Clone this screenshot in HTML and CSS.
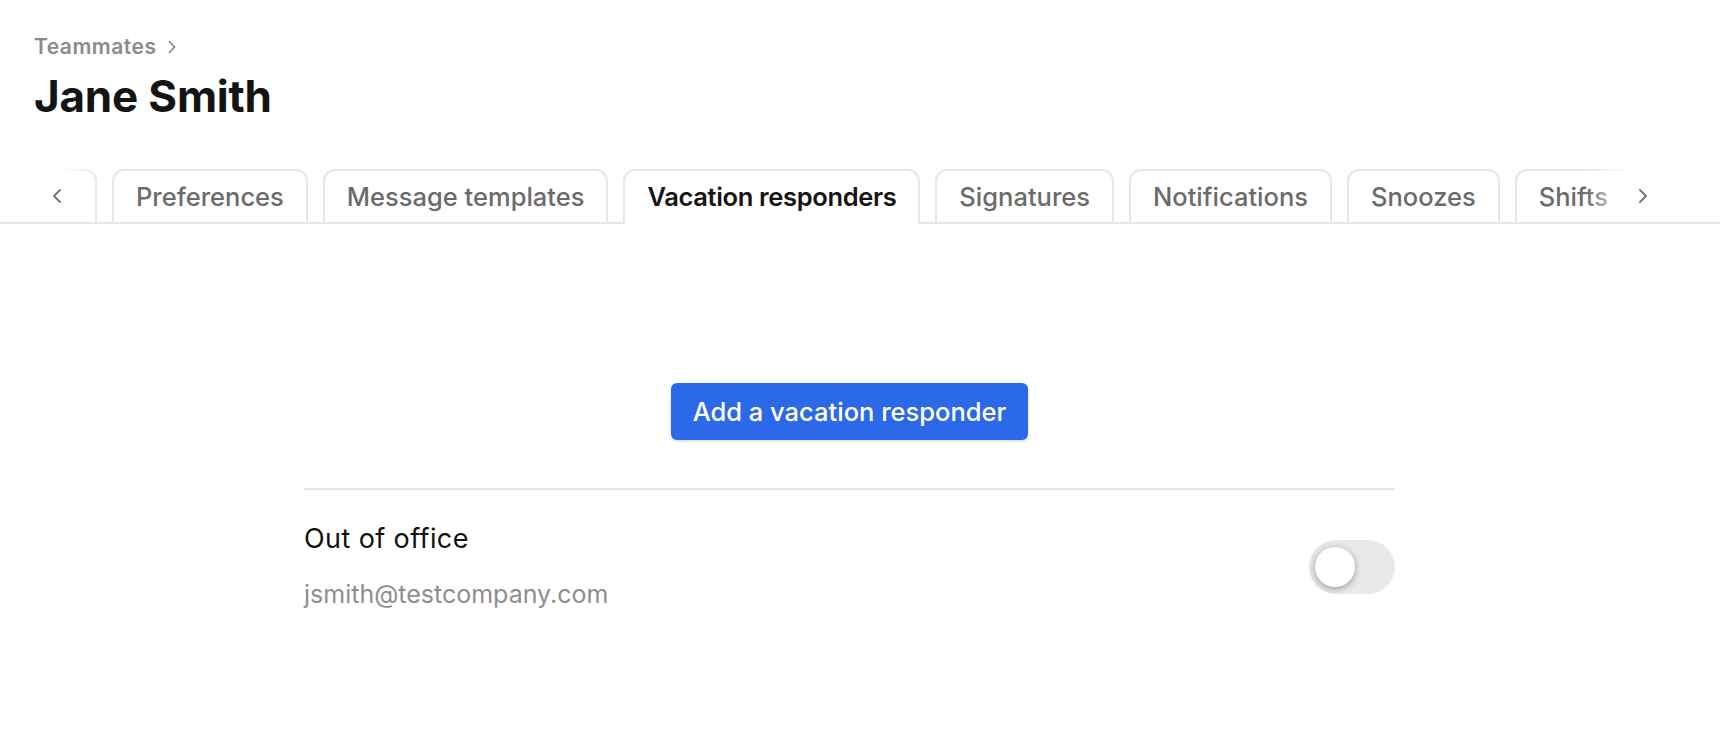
FILE: index.html
```html
<!DOCTYPE html>
<html lang="en">
<head>
<meta charset="utf-8">
<title>Jane Smith - Teammates</title>
<link rel="stylesheet" href="styles.css">
</head>
<body>
<header class="header">
  <nav class="crumbs">
    <a class="crumb" href="#">Teammates</a>
    <svg class="crumb-chev" viewBox="0 0 8 14" width="8" height="14" aria-hidden="true"><path d="M1.5 1.5 L6.5 7 L1.5 12.5" fill="none" stroke="currentColor" stroke-width="1.8" stroke-linecap="round" stroke-linejoin="round"/></svg>
  </nav>
  <h1 class="title">Jane Smith</h1>
</header>

<div class="tabs-wrap">
  <div class="tabs">
    <div class="tab tab-offscreen" aria-hidden="true"></div>
    <div class="tab">Preferences</div>
    <div class="tab">Message templates</div>
    <div class="tab tab-active">Vacation responders</div>
    <div class="tab">Signatures</div>
    <div class="tab">Notifications</div>
    <div class="tab">Snoozes</div>
    <div class="tab">Shifts</div>
  </div>
  <div class="fade fade-left">
    <svg class="chev" viewBox="0 0 10 16" width="10" height="16" aria-hidden="true"><path d="M8 2 L2 8 L8 14" fill="none" stroke="currentColor" stroke-width="2" stroke-linecap="round" stroke-linejoin="round"/></svg>
  </div>
  <div class="fade fade-right">
    <svg class="chev" viewBox="0 0 10 16" width="10" height="16" aria-hidden="true"><path d="M2 2 L8 8 L2 14" fill="none" stroke="currentColor" stroke-width="2" stroke-linecap="round" stroke-linejoin="round"/></svg>
  </div>
</div>

<main class="main">
  <div class="actions">
    <button class="btn-primary" type="button">Add a vacation responder</button>
  </div>
  <div class="divider"></div>
  <div class="row">
    <div class="row-text">
      <div class="row-title">Out of office</div>
      <div class="row-sub">jsmith@testcompany.com</div>
    </div>
    <div class="toggle" role="switch" aria-checked="false"><span class="knob"></span></div>
  </div>
</main>
</body>
</html>
```

FILE: styles.css
```css
* { box-sizing: border-box; }

html, body {
  margin: 0;
  background: #ffffff;
}

body {
  font-family: Inter, "Noto Sans", "Liberation Sans", sans-serif;
  color: #141414;
  width: 1720px;
  overflow: hidden;
}

.header {
  padding: 35px 0 0 34px;
}

.crumbs {
  display: flex;
  align-items: center;
  gap: 12px;
  height: 24px;
  color: #8b8b8b;
}

.crumb {
  font-size: 21px;
  line-height: 24px;
  font-weight: 600;
  color: #8b8b8b;
  text-decoration: none;
  letter-spacing: 0.5px;
}

.crumb-chev {
  display: block;
  margin-top: -1px;
}

.title {
  margin: 11px 0 0 0;
  font-size: 44px;
  line-height: 52px;
  font-weight: 700;
  color: #141414;
  letter-spacing: -0.2px;
}

/* Tabs */
.tabs-wrap {
  position: relative;
  margin-top: 47px;
  overflow: hidden;
}

.tabs-wrap::before {
  content: "";
  position: absolute;
  left: 0;
  right: 0;
  bottom: 0;
  height: 2px;
  background: #e3e6ea;
}

.tabs {
  display: flex;
  align-items: flex-end;
  gap: 15px;
}

.tab {
  flex-shrink: 0;
  position: relative;
  white-space: nowrap;
  font-size: 25.5px;
  line-height: 30px;
  font-weight: 500;
  color: #6b6b6b;
  padding: 11px 22px 10px;
  border: 2px solid #e4e7ec;
  border-bottom: 0;
  border-radius: 12px 12px 0 0;
  background: #ffffff;
  margin-bottom: 2px;
}

.tab-offscreen {
  width: 97px;
  height: 53px;
  border-left-color: transparent;
}

.tab-active {
  color: #151515;
  font-weight: 600;
  letter-spacing: -0.35px;
  margin-bottom: 0;
  padding-bottom: 12px;
  z-index: 1;
}

.fade {
  position: absolute;
  top: 0;
  bottom: 2px;
  display: flex;
  align-items: center;
  color: #767676;
  z-index: 2;
}

.fade-left {
  left: 0;
  width: 100px;
  padding-left: 52px;
  background: linear-gradient(to right, #ffffff 0, #ffffff 62px, rgba(255,255,255,0) 100px);
}

.fade-right {
  right: 0;
  width: 135px;
  padding-left: 53px;
  background: linear-gradient(to right, rgba(255,255,255,0) 0, #ffffff 45px, #ffffff 100%);
}

.chev { display: block; }

/* Main */
.main {
  margin-left: 304px;
  width: 1091px;
  padding-top: 159px;
}

.actions {
  display: flex;
  justify-content: center;
}

.btn-primary {
  font-family: inherit;
  font-size: 25.5px;
  line-height: 30px;
  font-weight: 500;
  color: #ffffff;
  background: #2c69e8;
  border: 0;
  border-radius: 6px;
  height: 57px;
  padding: 0 22px;
  box-shadow: 0 1px 3px rgba(0, 0, 0, 0.18);
  cursor: pointer;
}

.divider {
  margin-top: 48px;
  height: 2px;
  background: #e6e6e6;
}

.row {
  display: flex;
  align-items: center;
  justify-content: space-between;
  padding-top: 33px;
}

.row-title {
  font-size: 27px;
  line-height: 32px;
  font-weight: 400;
  letter-spacing: 0.4px;
  color: #111111;
}

.row-sub {
  margin-top: 23px;
  font-size: 25px;
  line-height: 32px;
  font-weight: 400;
  color: #8e8e8e;
}

.toggle {
  width: 86px;
  height: 54px;
  border-radius: 27px;
  background: #e9e9ea;
  padding: 7px 6px;
  display: flex;
  align-items: center;
}

.knob {
  width: 40px;
  height: 40px;
  border-radius: 50%;
  background: #ffffff;
  box-shadow: 0 2px 6px rgba(0, 0, 0, 0.28), 0 0 10px rgba(0, 0, 0, 0.08);
}
```
